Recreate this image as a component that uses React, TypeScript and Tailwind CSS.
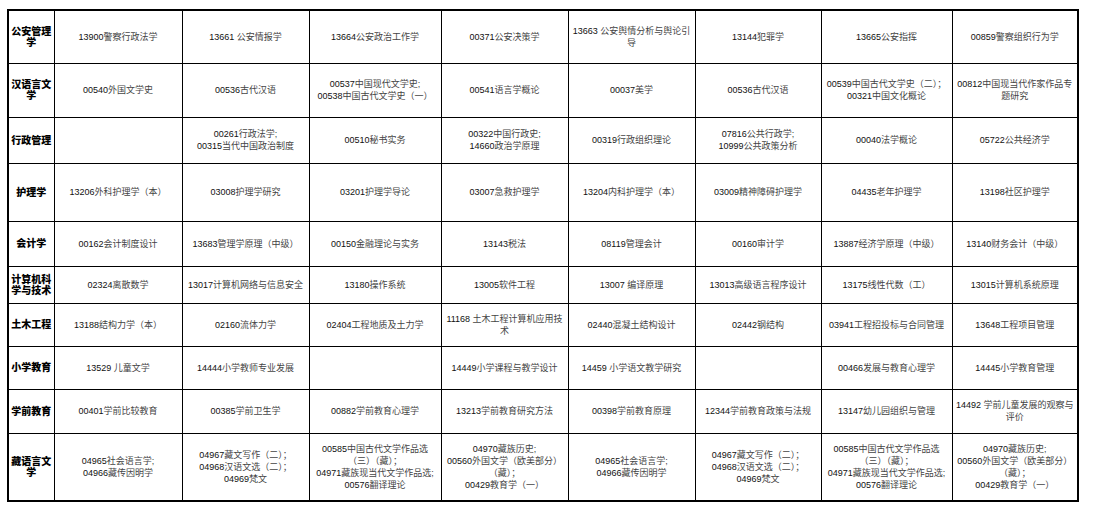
import React from "react";

const rows: { h: string; head: string; cells: string[] }[] = [
  {
    h: "h-[53px]",
    head: "公安管理学",
    cells: [
      "13900警察行政法学",
      "13661 公安情报学",
      "13664公安政治工作学",
      "00371公安决策学",
      "13663 公安舆情分析与舆论引|导",
      "13144犯罪学",
      "13665公安指挥",
      "00859警察组织行为学",
    ],
  },
  {
    h: "h-[54px]",
    head: "汉语言文学",
    cells: [
      "00540外国文学史",
      "00536古代汉语",
      "00537中国现代文学史;|00538中国古代文学史（一）",
      "00541语言学概论",
      "00037美学",
      "00536古代汉语",
      "00539中国古代文学史（二）；|00321中国文化概论",
      "00812中国现当代作家作品专|题研究",
    ],
  },
  {
    h: "h-[46px]",
    head: "行政管理",
    cells: [
      "",
      "00261行政法学;|00315当代中国政治制度",
      "00510秘书实务",
      "00322中国行政史;|14660政治学原理",
      "00319行政组织理论",
      "07816公共行政学;|10999公共政策分析",
      "00040法学概论",
      "05722公共经济学",
    ],
  },
  {
    h: "h-[58px]",
    head: "护理学",
    cells: [
      "13206外科护理学（本）",
      "03008护理学研究",
      "03201护理学导论",
      "03007急救护理学",
      "13204内科护理学（本）",
      "03009精神障碍护理学",
      "04435老年护理学",
      "13198社区护理学",
    ],
  },
  {
    h: "h-[45px]",
    head: "会计学",
    cells: [
      "00162会计制度设计",
      "13683管理学原理（中级）",
      "00150金融理论与实务",
      "13143税法",
      "08119管理会计",
      "00160审计学",
      "13887经济学原理（中级）",
      "13140财务会计（中级）",
    ],
  },
  {
    h: "h-[37px]",
    head: "计算机科学与技术",
    cells: [
      "02324离散数学",
      "13017计算机网络与信息安全",
      "13180操作系统",
      "13005软件工程",
      "13007 编译原理",
      "13013高级语言程序设计",
      "13175线性代数（工）",
      "13015计算机系统原理",
    ],
  },
  {
    h: "h-[43px]",
    head: "土木工程",
    cells: [
      "13188结构力学（本）",
      "02160流体力学",
      "02404工程地质及土力学",
      "11168 土木工程计算机应用技|术",
      "02440混凝土结构设计",
      "02442钢结构",
      "03941工程招投标与合同管理",
      "13648工程项目管理",
    ],
  },
  {
    h: "h-[43px]",
    head: "小学教育",
    cells: [
      "13529 儿童文学",
      "14444小学教师专业发展",
      "",
      "14449小学课程与教学设计",
      "14459 小学语文教学研究",
      "",
      "00466发展与教育心理学",
      "14445小学教育管理",
    ],
  },
  {
    h: "h-[44px]",
    head: "学前教育",
    cells: [
      "00401学前比较教育",
      "00385学前卫生学",
      "00882学前教育心理学",
      "13213学前教育研究方法",
      "00398学前教育原理",
      "12344学前教育政策与法规",
      "13147幼儿园组织与管理",
      "14492 学前儿童发展的观察与|评价",
    ],
  },
  {
    h: "h-[68px]",
    head: "藏语言文学",
    cells: [
      "04965社会语言学;|04966藏传因明学",
      "04967藏文写作（二）；|04968汉语文选（二）；|04969梵文",
      "00585中国古代文学作品选|（三）（藏）；|04971藏族现当代文学作品选;|00576翻译理论",
      "04970藏族历史;|00560外国文学（欧美部分）|（藏）；|00429教育学（一）",
      "04965社会语言学;|04966藏传因明学",
      "04967藏文写作（二）；|04968汉语文选（二）；|04969梵文",
      "00585中国古代文学作品选|（三）（藏）；|04971藏族现当代文学作品选;|00576翻译理论",
      "04970藏族历史;|00560外国文学（欧美部分）|（藏）；|00429教育学（一）",
    ],
  },
];

function Line({ text }: { text: string }) {
  const parts = text.split(/(\d+)/);
  return (
    <div className="whitespace-nowrap">
      {parts.map((p, i) =>
        /^\d+$/.test(p) ? (
          <span key={i} className="text-[#111]">
            {p}
          </span>
        ) : (
          <span key={i} className="text-[#444]">
            {p}
          </span>
        )
      )}
    </div>
  );
}

export default function App() {
  return (
    <div
      className="w-[1094px] h-[512px] bg-white pt-[9px] pl-[7px]"
      style={{ fontFamily: '"Liberation Sans", "Noto Sans CJK SC", sans-serif' }}
    >
      <table className="border-collapse table-fixed w-[1072px] border-2 border-black">
        <colgroup>
          <col className="w-[46px]" />
          <col className="w-[128px]" />
          <col className="w-[127px]" />
          <col className="w-[132px]" />
          <col className="w-[127px]" />
          <col className="w-[127px]" />
          <col className="w-[126px]" />
          <col className="w-[131px]" />
          <col className="w-[126px]" />
        </colgroup>
        <tbody>
          {rows.map((r, ri) => (
            <tr key={ri} className={r.h}>
              <td className="border border-black px-[1px] text-center align-middle text-[10px] leading-[11px] font-black text-black">
                {r.head}
              </td>
              {r.cells.map((c, ci) => (
                <td
                  key={ci}
                  className="border border-black px-0 text-center align-middle text-[9px] leading-[12px]"
                >
                  {c
                    ? c.split("|").map((l, li) => <Line key={li} text={l} />)
                    : null}
                </td>
              ))}
            </tr>
          ))}
        </tbody>
      </table>
    </div>
  );
}
